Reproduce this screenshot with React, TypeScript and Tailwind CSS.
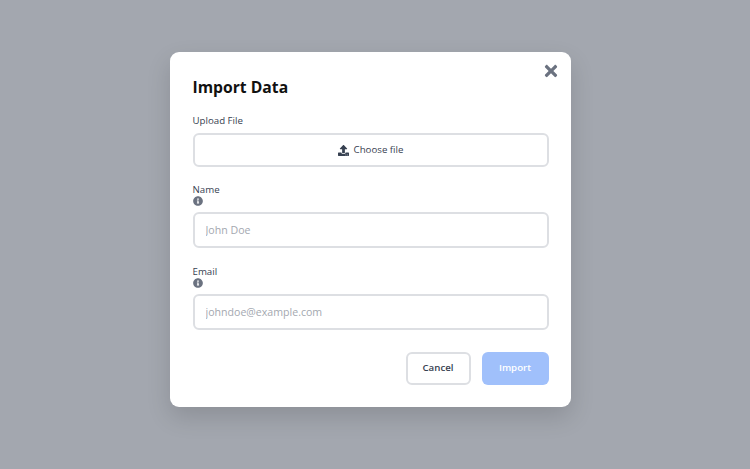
import { FaInfoCircle, FaTimes, FaUpload } from "react-icons/fa";

function Field({ label, placeholder }: { label: string; placeholder: string }) {
    return (
        <div className="flex flex-col">
            <label className="text-[9.7px] leading-[14px] font-medium text-[#374151]">{label}</label>
            <FaInfoCircle className="w-[10px] h-[10px] text-[#6b7280] -mt-[1px] mb-[6px] ml-[0.5px]" />
            <input
                placeholder={placeholder}
                className="h-[36px] w-full rounded-[6px] border-2 border-[#dddfe3] px-[11px] text-[10.6px] outline-none placeholder:text-[#a4a8b0]"
            />
        </div>
    );
}

export default function App() {
    return (
        <div
            className="flex h-[469px] w-[750px] items-start justify-start bg-[#a3a7af] pl-[170px] pt-[52px]"
            style={{ fontFamily: '"Open Sans", sans-serif' }}
        >
            <div className="relative w-[401px] h-[355px] rounded-[9px] bg-white px-[22.5px] pt-[24px] shadow-[0_10px_24px_rgba(0,0,0,0.14)]">
                <button className="absolute right-[11px] top-[10px] text-[#6b7280]">
                    <FaTimes className="w-[18px] h-[18px]" />
                </button>

                <h2 className="text-[15.7px] leading-[22px] font-bold text-[#111111]">Import Data</h2>

                <label className="mt-[16px] block text-[9.7px] leading-[14px] font-medium text-[#374151]">Upload File</label>
                <button className="mt-[5px] flex h-[34px] w-full items-center justify-center gap-[5px] rounded-[6px] border-2 border-[#dddfe3] text-[9.7px] font-medium text-[#374151]">
                    <FaUpload className="w-[11px] h-[11px] text-[#374151]" />
                    Choose file
                </button>

                <div className="mt-[16px] flex flex-col gap-[16.5px]">
                    <Field label="Name" placeholder="John Doe" />
                    <Field label="Email" placeholder="johndoe@example.com" />
                </div>

                <div className="mt-[22.5px] flex justify-end gap-[11px]">
                    <button className="h-[33px] w-[65px] rounded-[6px] border-2 border-[#dddfe3] text-[9.7px] font-semibold text-[#374151]">Cancel</button>
                    <button className="h-[33px] w-[67px] rounded-[6px] bg-[#a0c0fb] text-[9.7px] font-semibold text-white">Import</button>
                </div>
            </div>
        </div>
    );
}
